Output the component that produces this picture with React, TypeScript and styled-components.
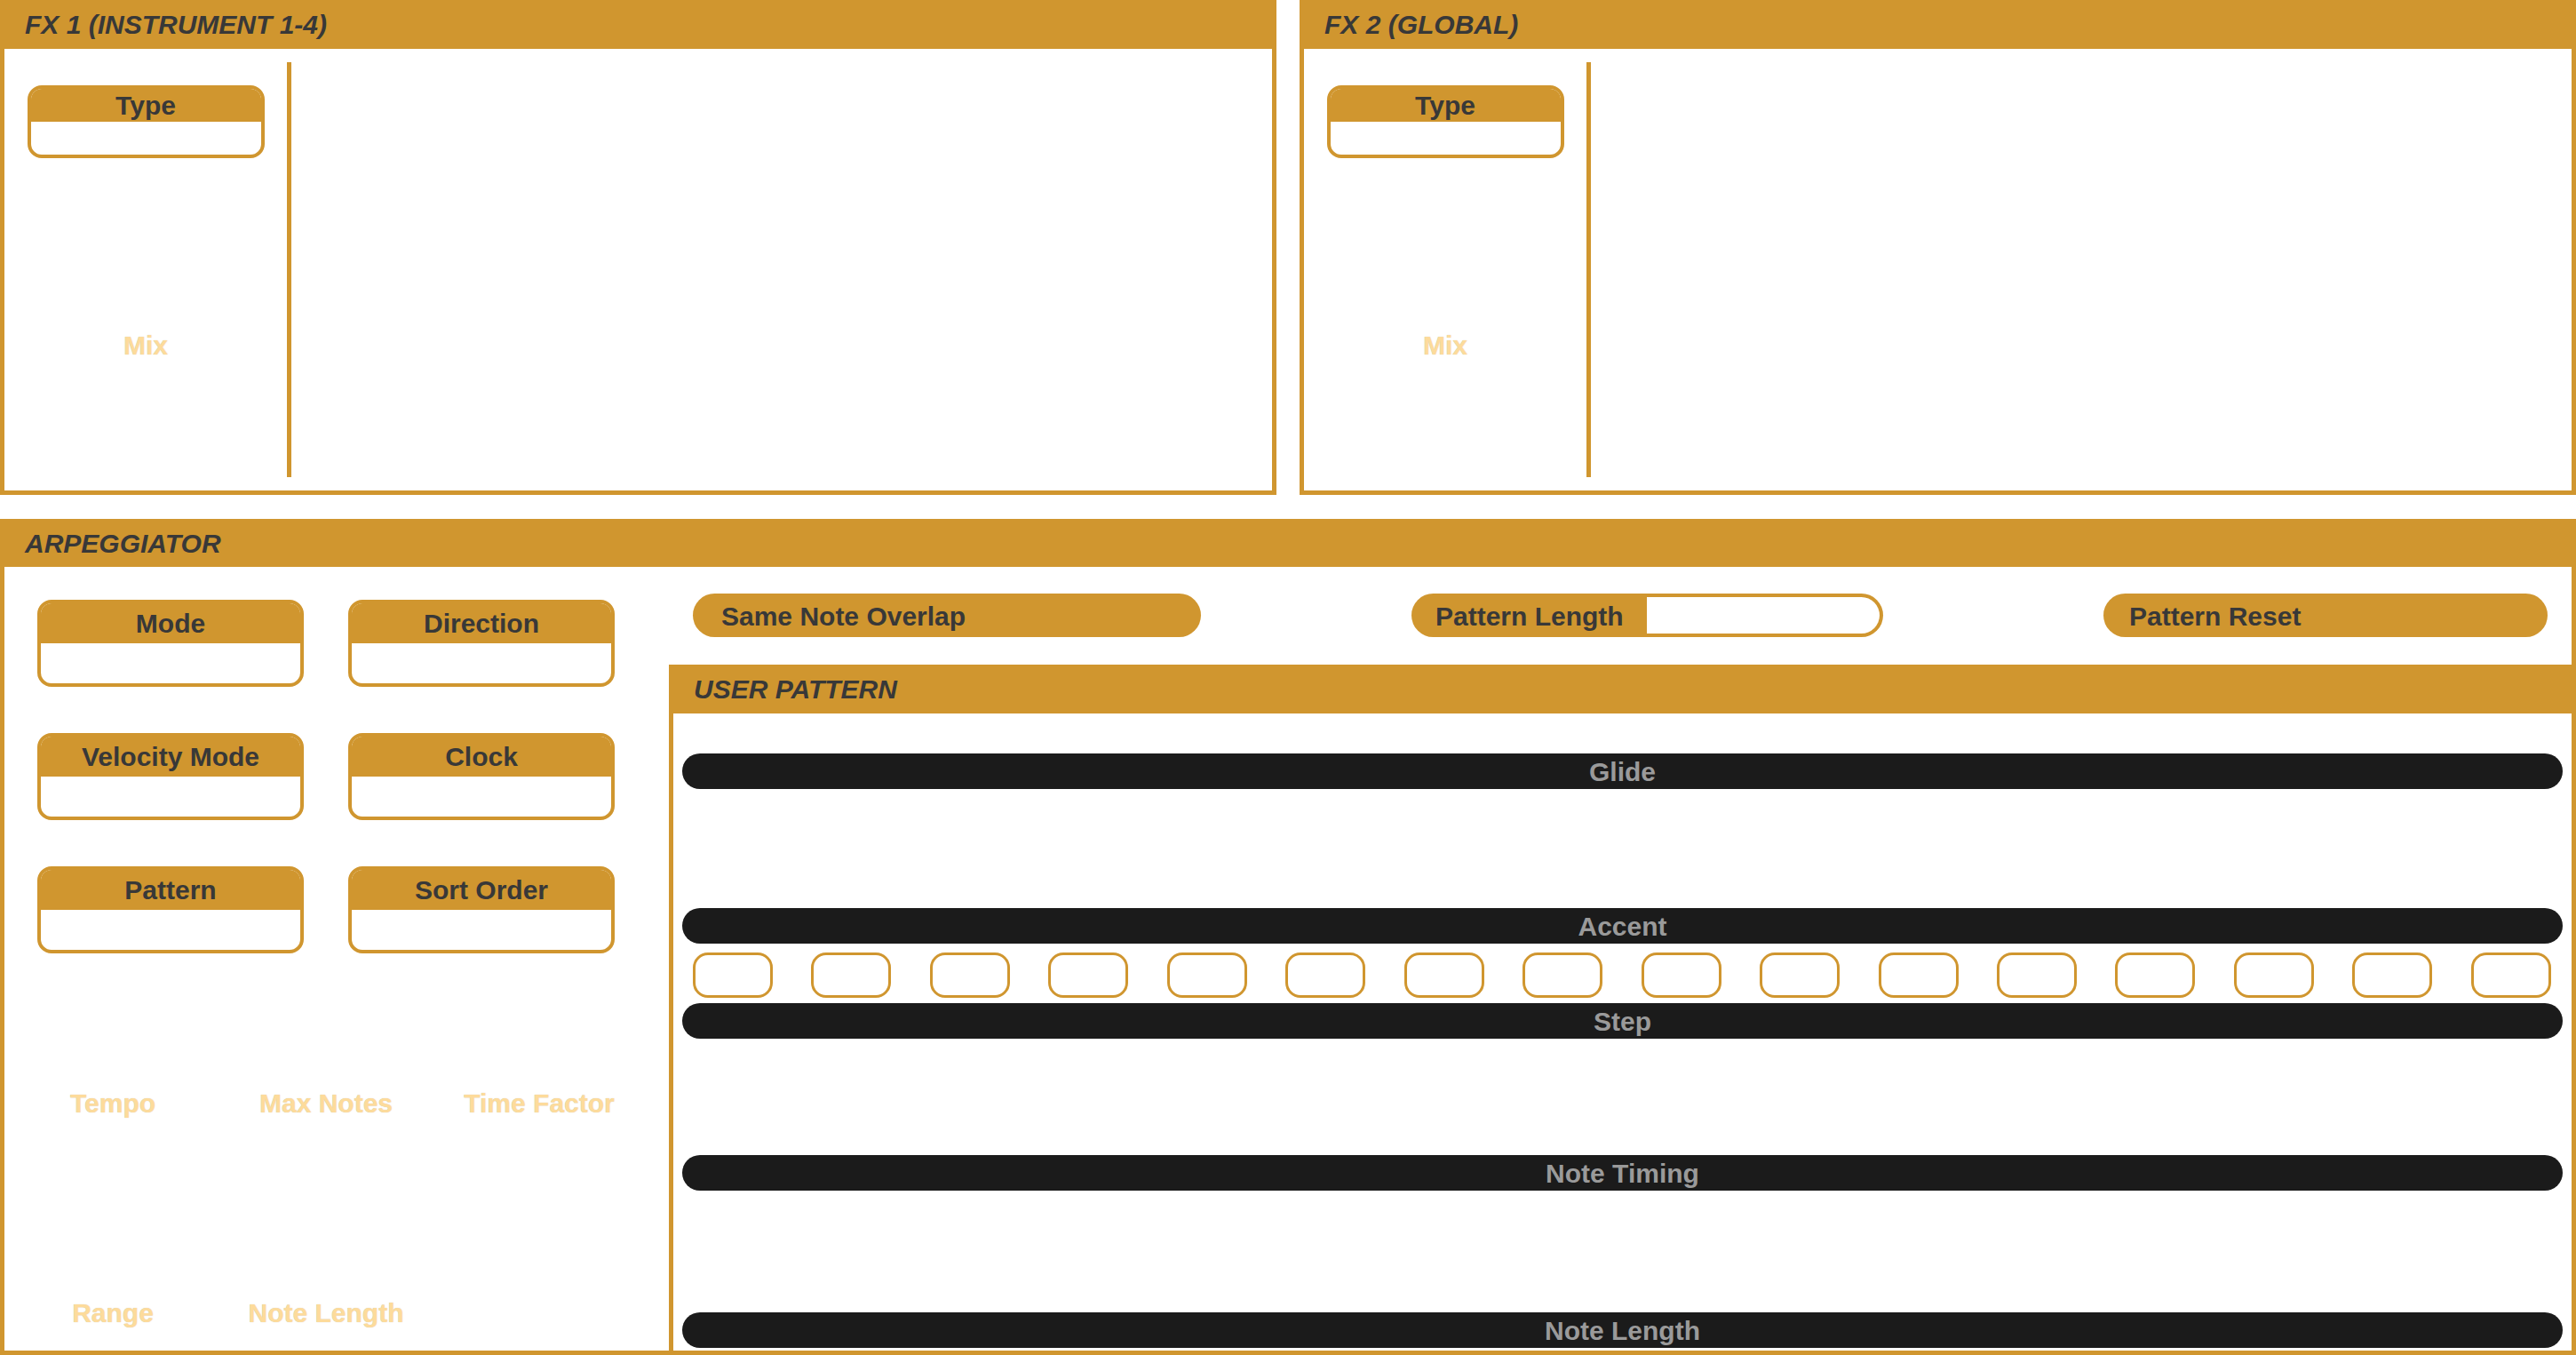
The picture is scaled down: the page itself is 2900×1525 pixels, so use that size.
import React from "react";
import styled, { createGlobalStyle } from "styled-components";

const GOLD = "#d0962f";
const INK = "#383838";
const PEACH = "#fddb9b";

const GlobalStyle = createGlobalStyle`
  html, body { margin: 0; padding: 0; background: #ffffff; }
  body { font-family: "Liberation Sans", Arial, sans-serif; }
  * { box-sizing: border-box; }
`;

const Page = styled.div`
  width: 2900px;
  height: 1525px;
  display: flex;
  flex-direction: column;
  gap: 27px;
  overflow: hidden;
`;

const TopRow = styled.div`
  display: flex;
  gap: 26px;
  height: 557px;
`;

const Panel = styled.section`
  flex: 1;
  display: flex;
  flex-direction: column;
  border: 5px solid ${GOLD};
  border-top: 0;
  min-height: 0;
`;

const PanelHeader = styled.header<{ $h?: number }>`
  height: ${(p) => p.$h ?? 55}px;
  flex: none;
  background: ${GOLD};
  display: flex;
  align-items: center;
  padding-left: 23px;
  padding-top: 1px;
  font-size: 30px;
  font-weight: bold;
  font-style: italic;
  color: ${INK};
`;

const FxBody = styled.div`
  flex: 1;
  display: flex;
`;

const FxLeft = styled.div`
  width: 318px;
  display: flex;
  flex-direction: column;
  align-items: center;
  padding-top: 41px;
`;

const Separator = styled.div`
  width: 5px;
  background: ${GOLD};
  margin: 15px 0;
`;

const FieldBox = styled.div<{ $w: number; $h: number }>`
  width: ${(p) => p.$w}px;
  height: ${(p) => p.$h}px;
  border: 4px solid ${GOLD};
  border-radius: 16px;
  display: flex;
  flex-direction: column;
  overflow: hidden;
  background: #fff;
`;

const FieldHead = styled.div`
  height: 50%;
  flex: none;
  background: ${GOLD};
  display: flex;
  align-items: center;
  justify-content: center;
  font-size: 30px;
  font-weight: bold;
  color: ${INK};
`;

const KnobLabel = styled.div<{ $mt?: number }>`
  margin-top: ${(p) => p.$mt ?? 0}px;
  height: 34px;
  line-height: 34px;
  text-align: center;
  font-size: 30px;
  font-weight: bold;
  color: ${PEACH};
  text-shadow: 0 0 1px rgba(150, 130, 95, 0.45);
`;

const ArpBody = styled.div`
  flex: 1;
  display: flex;
  min-height: 0;
`;

const ArpLeft = styled.div`
  width: 748px;
  flex: none;
  display: flex;
  flex-direction: column;
`;

const BoxGrid = styled.div`
  display: grid;
  grid-template-columns: 300px 300px;
  column-gap: 50px;
  row-gap: 52px;
  padding: 37px 0 0 37px;
`;

const LabelGrid = styled.div`
  display: grid;
  grid-template-columns: repeat(3, 240px);
  row-gap: 202px;
  padding-left: 2px;
  margin-top: 152px;
`;

const ArpRight = styled.div`
  flex: 1;
  display: flex;
  flex-direction: column;
  min-width: 0;
`;

const PillRow = styled.div`
  height: 110px;
  flex: none;
  display: flex;
  align-items: center;
  padding-bottom: 1px;
`;

const Pill = styled.div<{ $w: number; $pl: number; $ml: number }>`
  width: ${(p) => p.$w}px;
  margin-left: ${(p) => p.$ml}px;
  height: 49px;
  flex: none;
  border-radius: 25px;
  background: ${GOLD};
  display: flex;
  align-items: center;
  padding-left: ${(p) => p.$pl}px;
  padding-top: 3px;
  font-size: 30px;
  font-weight: bold;
  color: ${INK};
  white-space: nowrap;
  overflow: hidden;
`;

const PillLabel = styled.span`
  width: 238px;
  flex: none;
`;

const PillInput = styled.div`
  flex: 1;
  align-self: stretch;
  margin: 1px 4px 4px 0;
  background: #fff;
  border-radius: 0 21px 21px 0;
`;

const UserPattern = styled.div`
  flex: 1;
  display: flex;
  flex-direction: column;
  border-left: 5px solid ${GOLD};
`;

const PatternContent = styled.div`
  flex: 1;
  display: flex;
  flex-direction: column;
  padding: 0 10px;
`;

const Bar = styled.div<{ $mt: number }>`
  margin-top: ${(p) => p.$mt}px;
  height: 40px;
  flex: none;
  border-radius: 20px;
  background: #1b1b1b;
  color: #9a9a9a;
  font-size: 30px;
  font-weight: bold;
  display: flex;
  align-items: center;
  justify-content: center;
  padding-top: 2px;
`;

const StepRow = styled.div`
  margin-top: 10px;
  display: flex;
  justify-content: space-between;
  padding: 0 13px 0 12px;
`;

const StepBox = styled.div`
  width: 90px;
  height: 51px;
  border: 3px solid ${GOLD};
  border-radius: 17px;
  background: #fff;
`;

const FxPanel = ({ title }: { title: string }) => (
  <Panel>
    <PanelHeader>{title}</PanelHeader>
    <FxBody>
      <FxLeft>
        <FieldBox $w={267} $h={82}>
          <FieldHead>Type</FieldHead>
        </FieldBox>
        <KnobLabel $mt={194}>Mix</KnobLabel>
      </FxLeft>
      <Separator />
    </FxBody>
  </Panel>
);

const arpFields = ["Mode", "Direction", "Velocity Mode", "Clock", "Pattern", "Sort Order"];
const knobs = ["Tempo", "Max Notes", "Time Factor", "Range", "Note Length"];

export default function App() {
  return (
    <>
      <GlobalStyle />
      <Page>
        <TopRow>
          <FxPanel title="FX 1 (INSTRUMENT 1-4)" />
          <FxPanel title="FX 2 (GLOBAL)" />
        </TopRow>
        <Panel>
          <PanelHeader $h={54}>ARPEGGIATOR</PanelHeader>
          <ArpBody>
            <ArpLeft>
              <BoxGrid>
                {arpFields.map((f) => (
                  <FieldBox key={f} $w={300} $h={98}>
                    <FieldHead>{f}</FieldHead>
                  </FieldBox>
                ))}
              </BoxGrid>
              <LabelGrid>
                {knobs.map((k) => (
                  <KnobLabel key={k}>{k}</KnobLabel>
                ))}
              </LabelGrid>
            </ArpLeft>
            <ArpRight>
              <PillRow>
                <Pill $w={572} $pl={32} $ml={27}>Same Note Overlap</Pill>
                <Pill $w={531} $pl={27} $ml={237}>
                  <PillLabel>Pattern Length</PillLabel>
                  <PillInput />
                </Pill>
                <Pill $w={500} $pl={29} $ml={248}>Pattern Reset</Pill>
              </PillRow>
              <UserPattern>
                <PanelHeader $h={55}>USER PATTERN</PanelHeader>
                <PatternContent>
                  <Bar $mt={45}>Glide</Bar>
                  <Bar $mt={134}>Accent</Bar>
                  <StepRow>
                    {Array.from({ length: 16 }, (_, i) => (
                      <StepBox key={i} />
                    ))}
                  </StepRow>
                  <Bar $mt={6}>Step</Bar>
                  <Bar $mt={131}>Note Timing</Bar>
                  <Bar $mt={137}>Note Length</Bar>
                </PatternContent>
              </UserPattern>
            </ArpRight>
          </ArpBody>
        </Panel>
      </Page>
    </>
  );
}
